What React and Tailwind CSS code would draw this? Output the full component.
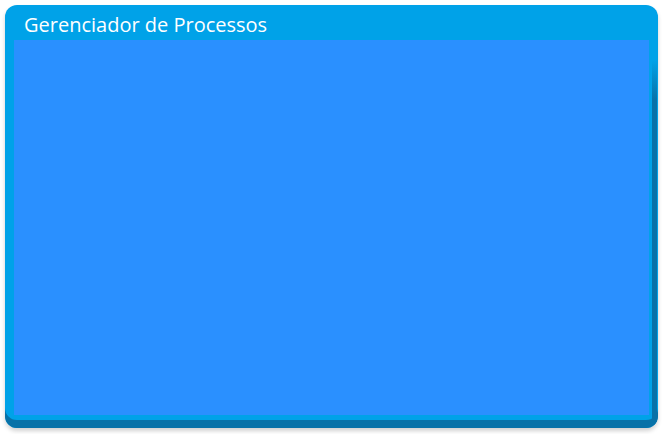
export default function App() {
  return (
    <div className="w-[662px] h-[434px] bg-white p-[5px]" style={{ fontFamily: '"Open Sans", "Noto Sans", sans-serif' }}>
      <div className="w-[653px] h-[423px] rounded-[12px] bg-[#00a2e8] flex flex-col overflow-hidden shadow-[inset_0_-8px_0_#0872a8,0_3px_4px_rgba(0,0,0,0.18)]">
        {/* title */}
        <div className="h-[35px] pl-[19px] pt-[8px] text-white text-[20px] leading-[24px]">
          Gerenciador de Processos
        </div>
        {/* content */}
        <div className="flex flex-1">
          <div className="ml-[9px] w-[635px] h-[375px] bg-[#2a90ff]" />
          <div className="ml-[3px] w-[5px] bg-[linear-gradient(to_bottom,#00a2e8_20px,#0872a8_60px)]" />
        </div>
      </div>
    </div>
  );
}
